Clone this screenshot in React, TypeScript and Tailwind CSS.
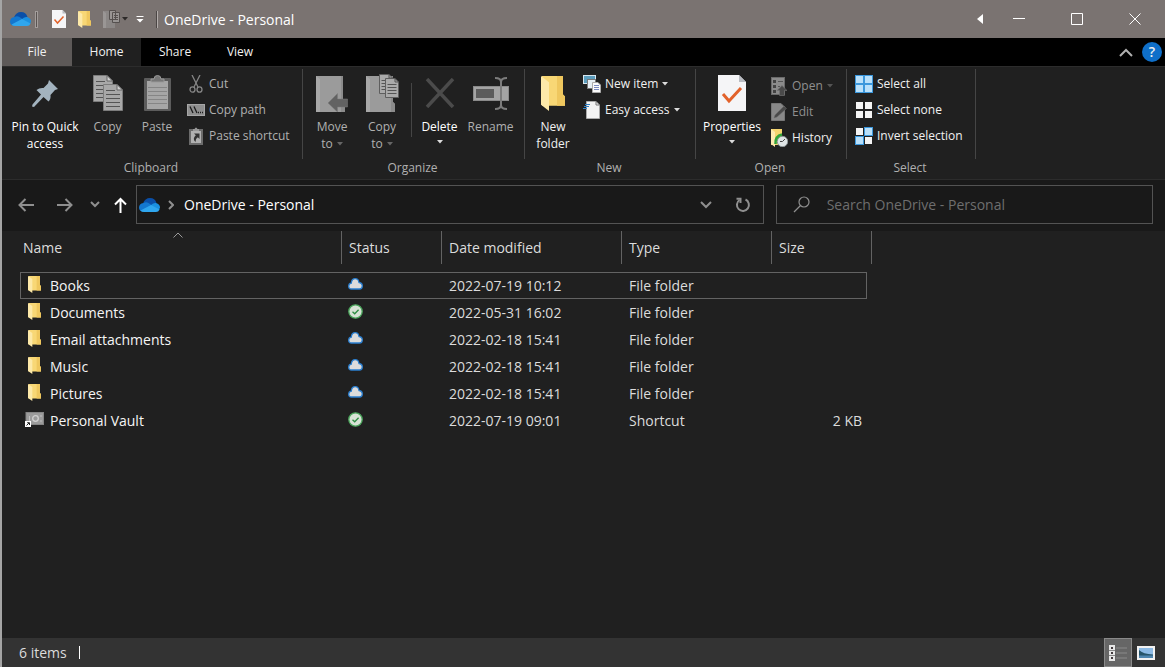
import type { ReactNode } from 'react'

/* ---------- icons ---------- */

const OneDriveIcon = () => (
  <svg width="21" height="14" viewBox="0 0 21 14">
    <path d="M4 5.500 Q6 0 11 0 Q16 0 17.500 5 L11 9Z" fill="#0a4fa8" />
    <path d="M0 10 Q0 5.500 4.500 5 Q7 3.600 9.500 5 L14 8 L6 13.500 H4 Q0.500 13.500 0 10Z" fill="#1377cf" />
    <path d="M11.500 7.500 Q14 4.400 17 5 Q21 6 21 9.500 L20 12Z" fill="#1a90e0" />
    <path d="M1.500 12.500 L12 7 L20.600 11.500 Q19.500 14 17 14 H5 Q2.500 14 1.500 12.500Z" fill="#2fa6ee" />
  </svg>
)

const FolderIcon = ({ w = 14, h = 18 }) => (
  <svg width={w} height={h} viewBox="0 0 24 34" preserveAspectRatio="none">
    <path d="M1 0 H22 V18 L24 20 V29 H1Z" fill="#f8d775" />
    <path d="M16 0 H22 V18 L24 20 V29 H16Z" fill="#efc75e" />
    <path d="M0 0 L8 6 V34 L0 28Z" fill="#fde9a9" />
  </svg>
)

const PropertiesIcon = ({ w = 28, h = 36 }) => (
  <svg width={w} height={h} viewBox="0 0 28 36">
    <path d="M0 0 H21 L28 7 V36 H0Z" fill="#f5f5f7" />
    <path d="M21 0 V7 H28Z" fill="#b9bcc2" />
    <path d="M5 19 L11 26 L23 13" fill="none" stroke="#e2622b" strokeWidth="3" />
  </svg>
)

const PinIcon = () => (
  <svg width="26" height="27" viewBox="0 0 26 27">
    <path d="M17 0 L26 9 L23 10 L18.500 15 Q19 19 16.500 21.500 L11.500 17 L2 27 L0 26.500 L0.500 24.500 L9 14.500 L4.500 10 Q7.500 7.500 11.500 8 L16 3.500Z" fill="#a3b3bf" />
  </svg>
)

const Page = ({ x, y }: { x: number; y: number }) => (
  <g transform={`translate(${x} ${y})`}>
    <path d="M0.500 0.500 H14 L19.500 6 V26.500 H0.500Z" fill="#a8a8a8" stroke="#7c7c7c" />
    <path d="M14 0.500 V6 H19.500Z" fill="#d0d0d0" stroke="#666" />
    <path d="M3 6.500 H12 M3 10.500 H17 M3 14.500 H17 M3 18.500 H17 M3 22.500 H17" stroke="#555" />
  </g>
)

const CopyIcon = () => (
  <svg width="30" height="36" viewBox="0 0 30 36">
    <Page x={0} y={0} />
    <Page x={10} y={9} />
  </svg>
)

const PasteIcon = () => (
  <svg width="27" height="36" viewBox="0 0 27 36">
    <rect y="3" width="27" height="33" rx="1" fill="#5c5c5c" />
    <rect x="3" y="6" width="21" height="28" fill="#a6a6a6" />
    <path d="M7 7 V4 H10 Q10 0.500 13.500 0.500 Q17 0.500 17 4 H20 V7Z" fill="#777" stroke="#999" />
    <path d="M4 12.500 H23 M4 16.500 H23 M4 20.500 H23 M4 24.500 H23 M4 28.500 H23" stroke="#858585" />
  </svg>
)

const CutIcon = () => (
  <svg width="14" height="18" viewBox="0 0 14 18" fill="none" stroke="#858585" strokeWidth="1.300">
    <path d="M3 0 L9 12 M11 0 L5 12" />
    <ellipse cx="3.500" cy="14.500" rx="2.500" ry="2.700" />
    <ellipse cx="10.500" cy="14.500" rx="2.500" ry="2.700" />
  </svg>
)

const CopyPathIcon = () => (
  <svg width="18" height="12" viewBox="0 0 18 12">
    <rect x="0.500" y="0.500" width="17" height="11" fill="#8f8f8f" stroke="#a6a6a6" />
    <path d="M3 2.500 L6 9 M7 2.500 L10 9 M11 8.500 H12 M13 8.500 H14 M15 8.500 H16" stroke="#1c1c1c" strokeWidth="1.300" />
  </svg>
)

const PasteShortcutIcon = () => (
  <svg width="14" height="18" viewBox="0 0 14 18">
    <rect y="2" width="14" height="16" fill="#6b6b6b" />
    <rect x="2" y="4" width="10" height="12" fill="#b0b0b0" />
    <path d="M4 2 H5.500 Q7 -1 8.500 2 H10 V4 H4Z" fill="#999" />
    <path d="M5 6.500 H10.500 V12 L8.800 10.300 Q6.500 11.500 6.500 15 Q3 12 6.800 8.300Z" fill="#333" />
  </svg>
)

const GreyFolder = () => (
  <>
    <path d="M0 0 H27 V26 L29 28 V36 H0Z" fill="#9b9b9b" />
    <path d="M0 0 L4 3 V36 H0Z" fill="#a8a8a8" />
    <path d="M25 0 H27 V26 L29 28 V36 H25Z" fill="#8b8b8b" />
  </>
)

const MoveToIcon = () => (
  <svg width="32" height="38" viewBox="0 -2 32 38">
    <GreyFolder />
    <path d="M12 27 L21.500 17.500 V23 H31.500 V31 H21.500 V36Z" fill="#626262" stroke="#7a7a7a" strokeWidth="0.500" />
  </svg>
)

const CopyToIcon = () => (
  <svg width="33" height="38" viewBox="0 -2 33 38">
    <GreyFolder />
    {['translate(13 -2)', 'translate(19 2)'].map((t) => (
      <g key={t} transform={t}>
        <path d="M0.500 0.500 H10 L13.500 4 V19.500 H0.500Z" fill="#aaa" stroke="#5e5e5e" />
        <path d="M10 0.500 V4 H13.500 M2.500 6.500 H11.500 M2.500 9.500 H11.500 M2.500 12.500 H11.500 M2.500 15.500 H11.500" fill="none" stroke="#555" />
      </g>
    ))}
  </svg>
)

const DeleteIcon = () => (
  <svg width="30" height="30" viewBox="0 0 30 30">
    <path d="M2 1 L28 29 M28 1 L2 29" stroke="#4b4b4b" strokeWidth="3.500" />
  </svg>
)

const RenameIcon = () => (
  <svg width="36" height="33" viewBox="0 0 36 33">
    <rect x="0.500" y="9.500" width="35" height="14" fill="#a4a4a4" stroke="#8a8a8a" />
    <rect x="3" y="12" width="18" height="9" fill="#5c5c5c" />
    <path d="M22 1 Q28 1 28 5 Q28 1 34 1 M28 4 V29 M22 32 Q28 32 28 28 Q28 32 34 32" fill="none" stroke="#7c7c7c" strokeWidth="2" />
  </svg>
)

const NewItemIcon = () => (
  <svg width="18" height="18" viewBox="0 0 18 18">
    <rect x="0.500" y="0.500" width="12" height="8" fill="#5b9dbd" stroke="#d8e6ee" />
    <rect x="4.500" y="4.500" width="8" height="9" fill="#e6eef4" stroke="#777" />
    <path d="M9.500 7.500 H15 L17.500 10 V17.500 H9.500Z" fill="#fafafa" stroke="#aaa" />
    <path d="M11 10.500 H16 M11 12.500 H16 M11 14.500 H16" stroke="#7a8ac0" />
  </svg>
)

const EasyAccessIcon = () => (
  <svg width="18" height="18" viewBox="0 0 18 18">
    <path d="M3.500 0.500 H13 L16.500 4 V17.500 H3.500Z" fill="#f3f3f3" stroke="#aaa" />
    <path d="M13 0.500 V4 H16.500" fill="none" stroke="#777" />
    <path d="M2 3.500 H7 M1 5.500 H6 M0 7.500 H4" stroke="#2f7fc4" strokeWidth="1.200" />
  </svg>
)

const OpenIcon = () => (
  <svg width="16" height="19" viewBox="0 0 16 19">
    <rect x="0.500" y="0.500" width="13" height="17" fill="#8b8b8b" stroke="#6a6a6a" />
    <path d="M2 3 H5 V6 H2Z M2 8 H5 V11 H2Z M2 13 H5 V16 H2Z" fill="#444" />
    <path d="M7 4.500 H12 M7 9.500 H9" stroke="#555" />
    <path d="M11 8.500 L16 13.500 H13.500 V18.500 H8.500 V13.500 H6Z" fill="#4a4a4a" stroke="#777" strokeWidth="0.600" />
  </svg>
)

const EditIcon = () => (
  <svg width="16" height="18" viewBox="0 0 16 18">
    <path d="M0.500 0.500 H10 L13.500 4 V17.500 H0.500Z" fill="#898989" stroke="#777" />
    <path d="M3 15 L4 12 L13 3 L15.500 5.500 L6 14Z" fill="#4a4a4a" stroke="#6e6e6e" strokeWidth="0.500" />
  </svg>
)

const HistoryIcon = () => (
  <svg width="17" height="18" viewBox="0 0 17 18">
    <path d="M0 0 H11 V16 H0Z" fill="#f5d570" />
    <path d="M0 0 L4 3 V18 L0 15Z" fill="#fdeab0" />
    <circle cx="11.500" cy="12.500" r="5.200" fill="#dfe5e6" stroke="#8b9496" />
    <path d="M11.500 12.500 L14 10 M11.500 12.500 H9" stroke="#444" />
    <path d="M4.500 15 Q4 7 11 5.500" fill="none" stroke="#2fa33a" strokeWidth="2.500" />
  </svg>
)

const SelectIcon = ({ on }: { on: boolean[] }) => (
  <svg width="18" height="18" viewBox="0 0 18 18">
    {on.map((sel, i) => {
      const x = (i % 2) * 9
      const y = Math.floor(i / 2) * 9
      return (
        <g key={i}>
          {sel && <rect x={x} y={y} width="9" height="9" fill="#3b97dc" />}
          <rect x={x + 1} y={y + 1} width="7" height="7" fill={sel ? '#b9e0fa' : '#f4f4f4'} />
        </g>
      )
    })}
  </svg>
)

const CloudStatus = () => (
  <svg width="15" height="12" viewBox="0 0 15 12" role="img" aria-label="Available when online">
    <path d="M3.500 11 Q0.700 11 0.700 8.200 Q0.700 5.500 3.300 5.200 Q3.600 0.700 7.200 0.700 Q10.400 0.700 11 4.500 Q14.300 5 14.300 8 Q14.300 11 11.500 11Z" fill="#dcdcdc" stroke="#2a7fd0" strokeWidth="1.300" />
  </svg>
)

const SyncedStatus = () => (
  <svg width="15" height="15" viewBox="0 0 15 15" role="img" aria-label="Available on this device">
    <circle cx="7.500" cy="7.500" r="6.700" fill="#d8e2d6" stroke="#4ba65c" strokeWidth="1.300" />
    <path d="M4.500 7.800 L6.700 9.800 L10.600 5.700" fill="none" stroke="#2f8d44" strokeWidth="1.300" />
  </svg>
)

const VaultIcon = () => (
  <svg width="19" height="16" viewBox="0 0 19 16">
    <rect x="1" y="0.500" width="17.500" height="12" fill="#9b9b9b" stroke="#858585" />
    <circle cx="10.500" cy="6.500" r="2.800" fill="none" stroke="#d0d0d0" strokeWidth="1.300" />
    <path d="M4.500 4 V9 M16 3 V5 M16 8 V10" stroke="#c0c0c0" />
    <rect y="9" width="6" height="6" fill="#fff" />
    <path d="M1.500 13.500 L4 11 M2.200 10.700 H4.500 V13" fill="none" stroke="#222" />
  </svg>
)

const Caret = ({ className = 'text-[#dcdcdc]' }) => (
  <svg width="6" height="4" viewBox="0 0 6 4" className={className}>
    <path d="M0 0 H6 L3 3.500Z" fill="currentColor" />
  </svg>
)

const Chevron = ({ d, w, h }: { d: string; w: number; h: number }) => (
  <svg width={w} height={h} viewBox={`0 0 ${w} ${h}`} fill="none" stroke="currentColor" strokeWidth="2">
    <path d={d} />
  </svg>
)

/* ---------- ribbon pieces ---------- */

function Group({ label, className, children }: { label: string; className: string; children: ReactNode }) {
  return (
    <section aria-label={label} className={`flex shrink-0 ${className}`}>
      <div className="flex flex-1 flex-col">
        <div className="flex h-[91px] pt-1">{children}</div>
        <h2 className="pr-0.5 text-center leading-[20px] text-[#b0b0b0]">{label}</h2>
      </div>
      <div className="mt-0.5 h-[90px] w-px bg-[#454545]" />
    </section>
  )
}

type BigProps = { icon: ReactNode; className: string; children: ReactNode }

function BigButton({ icon, className, children }: BigProps) {
  return (
    <button className={`flex flex-col items-center justify-start leading-[17px] ${className}`}>
      <span className="mb-[3px] flex h-[44px] shrink-0 items-center justify-center">{icon}</span>
      {children}
    </button>
  )
}

function SmallButton({ icon, label, caret, className = 'text-[#f0f0f0]' }: { icon: ReactNode; label: string; caret?: ReactNode; className?: string }) {
  return (
    <button className={`flex h-[26px] items-center gap-1 whitespace-nowrap ${className}`}>
      <span className="flex w-[18px] justify-center">{icon}</span>
      <span>{label}</span>
      {caret}
    </button>
  )
}

const files = [
  { name: 'Books', synced: false, date: '2022-07-19 10:12', type: 'File folder', size: '' },
  { name: 'Documents', synced: true, date: '2022-05-31 16:02', type: 'File folder', size: '' },
  { name: 'Email attachments', synced: false, date: '2022-02-18 15:41', type: 'File folder', size: '' },
  { name: 'Music', synced: false, date: '2022-02-18 15:41', type: 'File folder', size: '' },
  { name: 'Pictures', synced: false, date: '2022-02-18 15:41', type: 'File folder', size: '' },
  { name: 'Personal Vault', synced: true, date: '2022-07-19 09:01', type: 'Shortcut', size: '2 KB' },
]

const columns = [
  { label: 'Name', col: 'w-[322px]', cell: 'pl-[3px] w-full' },
  { label: 'Status', col: 'w-[100px]', cell: 'pl-[7px] w-full' },
  { label: 'Date modified', col: 'w-[180px]', cell: 'pl-[7px] w-full' },
  { label: 'Type', col: 'w-[150px]', cell: 'pl-[7px] w-full' },
  { label: 'Size', col: 'w-[95px]', cell: 'pl-[7px] w-[100px]' },
]

function TitleBar() {
  return (
    <header className="flex h-[38px] items-center bg-[#7a7371] pr-px text-white">
      <div className="flex flex-1 items-center pl-2">
        <OneDriveIcon />
        <span className="ml-1 h-[17px] w-[3px] border border-[#a39d9b] bg-[#5a5452]" />
        <button aria-label="Properties" className="ml-3.5"><PropertiesIcon w={14} h={18} /></button>
        <button aria-label="New folder" className="ml-3"><FolderIcon w={13} h={17} /></button>
        <button aria-label="Copy to" className="ml-3 flex items-center gap-0.5">
          <svg width="17" height="18" viewBox="0 0 17 18">
            <path d="M0 1 H12 V18 H0Z" fill="#8b8786" />
            <path d="M0 1 L3 3 V18 H0Z" fill="#9a9695" />
            <path d="M6.500 0.500 H12.500 V9.500 H6.500Z M9.500 2.500 H16.500 V12.500 H9.500Z" fill="#989493" stroke="#55504f" />
            <path d="M11 5.500 H15 M11 7.500 H15 M11 9.500 H15" stroke="#55504f" />
          </svg>
          <Caret className="text-[#2c2928]" />
        </button>
        <button aria-label="Customize Quick Access Toolbar" className="ml-2">
          <svg width="8" height="7" viewBox="0 0 8 7"><path d="M0.500 0 H7.500 V1 H0.500Z M0.500 3 H7.500 L4 6.500Z" fill="#fff" /></svg>
        </button>
        <span className="mr-1.5 ml-3 h-[17px] w-[2px] border-l border-[#4b4645] bg-[#b3adab]" />
        <h1 className="pt-0.5 text-[14px]">OneDrive - Personal</h1>
      </div>
      <button aria-label="Back" className="flex w-[20px] justify-center">
        <svg width="6" height="10" viewBox="0 0 6 10"><path d="M6 0 V10 L0 5Z" fill="#fff" /></svg>
      </button>
      {[
        ['Minimize', 'M0 5.5 H12'],
        ['Maximize', 'M0.500 0.500 H11.500 V11.500 H0.500Z'],
        ['Close', 'M0.500 0.500 L11.500 11.500 M11.500 0.500 L0.500 11.500'],
      ].map(([label, d]) => (
        <button key={label} aria-label={label} className="flex h-full w-[58px] items-center justify-center">
          <svg width="12" height="12" viewBox="0 0 12 12" fill="none" stroke="#fff"><path d={d} /></svg>
        </button>
      ))}
    </header>
  )
}

function Ribbon() {
  return (
    <div className="flex h-[114px] overflow-hidden border-y border-[#2c2c2c] bg-[#202020] text-[12px]">
      <Group label="Clipboard" className="w-[301px]">
        <BigButton icon={<PinIcon />} className="ml-1 w-[78px] text-white">Pin to Quick<br />access</BigButton>
        <BigButton icon={<CopyIcon />} className="w-[47px] text-[#b0b0b0]">Copy</BigButton>
        <BigButton icon={<PasteIcon />} className="w-[52px] text-[#b0b0b0]">Paste</BigButton>
        <div className="ml-1">
          <SmallButton icon={<CutIcon />} label="Cut" className="text-[#b0b0b0]" />
          <SmallButton icon={<CopyPathIcon />} label="Copy path" className="text-[#b0b0b0]" />
          <SmallButton icon={<PasteShortcutIcon />} label="Paste shortcut" className="text-[#b0b0b0]" />
        </div>
      </Group>
      <Group label="Organize" className="w-[222px]">
        <BigButton icon={<MoveToIcon />} className="ml-1 w-[50px] text-[#b0b0b0]">
          Move
          <span className="flex items-center gap-1">to <Caret className="text-[#666]" /></span>
        </BigButton>
        <BigButton icon={<CopyToIcon />} className="w-[50px] text-[#b0b0b0]">
          Copy
          <span className="flex items-center gap-1">to <Caret className="text-[#666]" /></span>
        </BigButton>
        <div className="mx-1 mt-3 h-[54px] w-px bg-[#454545]" />
        <BigButton icon={<DeleteIcon />} className="w-[47px] text-white">
          Delete
          <span className="flex h-[13px] items-center"><Caret /></span>
        </BigButton>
        <BigButton icon={<RenameIcon />} className="w-[55px] text-[#b0b0b0]">Rename</BigButton>
      </Group>
      <Group label="New" className="w-[171px]">
        <BigButton icon={<FolderIcon w={24} h={35} />} className="ml-1 w-[48px] text-[#f0f0f0]">New<br />folder</BigButton>
        <div className="ml-1.5">
          <SmallButton icon={<NewItemIcon />} label="New item" caret={<Caret />} />
          <SmallButton icon={<EasyAccessIcon />} label="Easy access" caret={<Caret />} />
        </div>
      </Group>
      <Group label="Open" className="w-[151px]">
        <BigButton icon={<PropertiesIcon />} className="ml-1 w-[64px] text-white">
          Properties
          <span className="flex h-[13px] items-center"><Caret /></span>
        </BigButton>
        <div className="ml-1.5 pt-0.5">
          <SmallButton icon={<OpenIcon />} label="Open" caret={<Caret className="text-[#555]" />} className="text-[#8f8f8f]" />
          <SmallButton icon={<EditIcon />} label="Edit" className="text-[#8f8f8f]" />
          <SmallButton icon={<HistoryIcon />} label="History" />
        </div>
      </Group>
      <Group label="Select" className="w-[129px]">
        <div className="ml-2">
          <SmallButton icon={<SelectIcon on={[true, true, true, true]} />} label="Select all" />
          <SmallButton icon={<SelectIcon on={[false, false, false, false]} />} label="Select none" />
          <SmallButton icon={<SelectIcon on={[false, true, true, false]} />} label="Invert selection" />
        </div>
      </Group>
    </div>
  )
}

function NavBar() {
  return (
    <div className="flex h-[51px] items-center bg-[#191919] pr-3 pb-0.5 text-[#8f8f8f]">
      <button aria-label="Back" className="ml-4"><Chevron w={16} h={14} d="M16 7 H1.500 M7.500 1 L1.500 7 L7.500 13" /></button>
      <button aria-label="Forward" className="ml-[23px]"><Chevron w={16} h={14} d="M0 7 H14.500 M8.500 1 L14.500 7 L8.500 13" /></button>
      <button aria-label="Recent locations" className="ml-[17px]"><Chevron w={10} h={7} d="M1 1 L5 5 L9 1" /></button>
      <button aria-label="Up" className="ml-[14px] text-white"><Chevron w={13} h={16} d="M6.500 16 V2 M1 7.500 L6.500 2 L12 7.500" /></button>
      <div className="ml-[9px] flex h-[39px] flex-[5] items-center border border-[#535353]">
        <span className="ml-0.5"><OneDriveIcon /></span>
        <span className="ml-2"><Chevron w={6} h={10} d="M1 1 L5 5 L1 9" /></span>
        <a href="#" className="ml-2.5 flex-1 text-white">OneDrive - Personal</a>
        <button aria-label="Previous locations" className="mr-3"><Chevron w={12} h={8} d="M1 1 L6 6 L11 1" /></button>
        <button aria-label="Refresh" className="flex h-full w-[39px] items-center justify-center">
          <svg width="16" height="16" viewBox="0 0 16 16" fill="none" stroke="currentColor" strokeWidth="2">
            <path d="M10.500 2.500 A6 6 0 1 1 4.500 3" />
            <path d="M1.500 1.800 H5.500 V6" />
          </svg>
        </button>
      </div>
      <label className="ml-3 flex h-[39px] flex-[3] items-center border border-[#535353]">
        <svg width="18" height="17" viewBox="0 0 18 17" fill="none" stroke="currentColor" strokeWidth="1.200" className="ml-4">
          <circle cx="11" cy="6" r="5" />
          <path d="M7.500 9.500 L1 16" />
        </svg>
        <input type="search" aria-label="Search" placeholder="Search OneDrive - Personal" className="ml-4 min-w-0 flex-1 bg-transparent outline-none placeholder:text-[#6e6e6e]" />
      </label>
    </div>
  )
}

function FileList() {
  return (
    <main className="flex-1 pl-[18px]">
      <table className="w-[847px] table-fixed border-collapse text-left">
        <thead>
          <tr>
            {columns.map((c) => (
              <th key={c.label} className={`p-0 pb-2 font-normal text-[#dcdcdc] ${c.col}`}>
                <div className={`relative flex h-[33px] items-center border-r border-[#636363] ${c.cell}`}>
                  {c.label}
                  {c.label === 'Name' && (
                    <svg width="10" height="6" viewBox="0 0 10 6" className="absolute top-px left-[153px]" fill="none" stroke="#9a9a9a">
                      <path d="M0.500 5.500 L5 1 L9.500 5.500" />
                    </svg>
                  )}
                </div>
              </th>
            ))}
          </tr>
        </thead>
        <tbody className="text-[#dcdcdc]">
          {files.map((f, i) => (
            <tr key={f.name} className={`h-[27px] ${i === 0 ? 'outline outline-1 -outline-offset-1 outline-[#636363]' : ''}`}>
              <td className="p-0 pl-[5px]">
                <div className="flex items-center text-[#f5f5f5]">
                  <span className="mr-1.5 flex w-[19px] justify-center pb-0.5">{f.type === 'Shortcut' ? <VaultIcon /> : <FolderIcon w={13} h={17} />}</span>
                  {f.name}
                </div>
              </td>
              <td className="p-0 pb-[3px] pl-1.5">
                <span className="flex">{f.synced ? <SyncedStatus /> : <CloudStatus />}</span>
              </td>
              <td className="p-0 pl-[7px]">{f.date}</td>
              <td className="p-0 pl-[7px]">{f.type}</td>
              <td className="p-0 pr-[5px] text-right">{f.size}</td>
            </tr>
          ))}
        </tbody>
      </table>
    </main>
  )
}

export default function App() {
  return (
    <div className="flex min-h-screen flex-col border-l-2 border-[#a5a5a5] bg-[#202020] font-['Open_Sans','Noto_Sans',sans-serif] text-[14px] leading-[20px]">
      <TitleBar />
      <nav className="flex h-[28px] items-stretch bg-black text-[12px] text-[#f0f0f0]">
        <button className="w-[70px] bg-[#5d5958]">File</button>
        <button className="w-[69px] bg-[#202020]">Home</button>
        <button className="w-[68px]">Share</button>
        <button className="w-[62px]">View</button>
        <button aria-label="Minimize the Ribbon" className="ml-auto text-[#b0b0b0]"><Chevron w={14} h={9} d="M1 8 L7 2 L13 8" /></button>
        <button aria-label="Help" className="mr-[3px] ml-[9px] h-[20px] w-[20px] self-center rounded-full bg-[#0f6fc9] text-center text-[14px] font-semibold">?</button>
      </nav>
      <Ribbon />
      <NavBar />
      <FileList />
      <footer className="flex h-[29px] items-center bg-[#333] pl-[17px] text-[#dcdcdc]">
        <span>6 items</span>
        <span className="ml-3 h-[13px] w-px bg-white" />
        <button aria-label="Details view" className="ml-auto flex h-full w-[28px] items-center justify-center border border-[#8a8a8a] bg-[#666]">
          <svg width="18" height="16" viewBox="0 0 18 16">
            <path d="M0 0 H6 V16 H0Z" fill="#e6e6e6" />
            <path d="M2 2 H4 V4 H2Z M2 7 H4 V9 H2Z M2 12 H4 V14 H2Z" fill="#41393c" />
            <path d="M0 5.500 H6 M0 10.500 H6" stroke="#888" />
            <path d="M7 3 H18 M7 8 H18 M7 13 H18" stroke="#8a8a8a" />
          </svg>
        </button>
        <button aria-label="Large icons view" className="mr-2.5 ml-[5px]">
          <svg width="18" height="14" viewBox="0 0 18 14">
            <rect width="18" height="14" fill="#f2f2f2" />
            <rect x="2" y="2" width="14" height="10" fill="#8dbbe6" />
            <path d="M2 4 Q6 8 16 8.500 V10 H2Z" fill="#27556a" />
            <path d="M2 9.500 H16 V12 H2Z" fill="#4f86b0" />
          </svg>
        </button>
      </footer>
    </div>
  )
}
